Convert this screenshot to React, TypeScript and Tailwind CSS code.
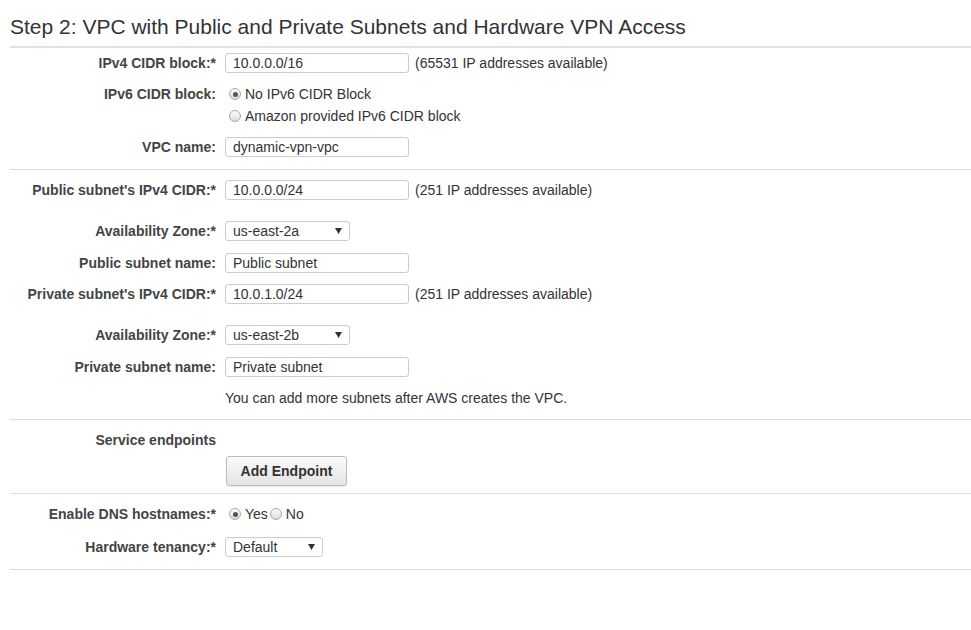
import React from 'react';

const font = { fontFamily: '"Liberation Sans", Arial, sans-serif' };

function Label({ children }: { children: React.ReactNode }) {
	return (
		<div className="w-[206px] shrink-0 text-right font-bold text-[14px] text-[#444] leading-[20px]">
			{children}
		</div>
	);
}

function Row({ label, children, className = '' }: { label?: React.ReactNode; children?: React.ReactNode; className?: string }) {
	return (
		<div className={`flex items-center h-[20px] ${className}`}>
			<Label>{label}</Label>
			<div className="pl-[9px] flex items-center h-[20px]">{children}</div>
		</div>
	);
}

function TextBox({ value }: { value: string }) {
	return (
		<div className="w-[184px] h-[20px] border border-[#ccc] rounded-[3px] pl-[7px] text-[14px] leading-[18px] text-[#333] bg-white">
			{value}
		</div>
	);
}

function Select({ value, width }: { value: string; width: string }) {
	return (
		<div
			className={`${width} h-[20px] border border-[#ccc] rounded-[3px] pl-[7px] pr-[7px] flex items-center justify-between text-[14px] leading-[18px] text-[#333] bg-white`}
		>
			<span>{value}</span>
			<svg width="7" height="6" viewBox="0 0 7 6">
				<path d="M0 0h7L3.5 6z" fill="#333" />
			</svg>
		</div>
	);
}

function Radio({ checked }: { checked?: boolean }) {
	return (
		<span className="w-[12px] h-[12px] rounded-full border border-[#a9a9a9] bg-gradient-to-b from-[#fdfdfd] to-[#dcdcdc] flex items-center justify-center shrink-0">
			{checked && <span className="w-[5px] h-[5px] rounded-full bg-[#555]" />}
		</span>
	);
}

function Hint({ children }: { children: React.ReactNode }) {
	return <span className="ml-[6px] text-[14px] leading-[20px] text-[#333]">{children}</span>;
}

function Divider() {
	return <div className="h-px shrink-0 bg-[#ddd]" />;
}

export default function App() {
	return (
		<div className="w-[971px] h-[630px] bg-white pl-[10px] flex flex-col" style={font}>
			{/* Heading */}
			<div className="h-[48px] shrink-0 pt-[14px] border-b-2 border-[#e2e2e2]">
				<h2 className="text-[21px] leading-[26px] text-[#333]">
					Step 2: VPC with Public and Private Subnets and Hardware VPN Access
				</h2>
			</div>

			{/* VPC */}
			<div className="pt-[5px] pb-[12px] flex flex-col">
				<Row label="IPv4 CIDR block:*">
					<TextBox value="10.0.0.0/16" />
					<Hint>(65531 IP addresses available)</Hint>
				</Row>
				<div className="flex mt-[10px] h-[44px]">
					<div className="w-[206px] shrink-0 text-right font-bold text-[14px] text-[#444] leading-[22px]">
						IPv6 CIDR block:
					</div>
					<div className="pl-[13px] flex flex-col text-[14px] text-[#333] leading-[22px]">
						<label className="flex items-center gap-[4px] h-[22px]">
							<Radio checked />
							No IPv6 CIDR Block
						</label>
						<label className="flex items-center gap-[4px] h-[22px]">
							<Radio />
							Amazon provided IPv6 CIDR block
						</label>
					</div>
				</div>
				<Row label="VPC name:" className="mt-[10px]">
					<TextBox value="dynamic-vpn-vpc" />
				</Row>
			</div>
			<Divider />

			{/* Subnets */}
			<div className="pt-[10px] pb-[11px] flex flex-col">
				<Row label="Public subnet's IPv4 CIDR:*">
					<TextBox value="10.0.0.0/24" />
					<Hint>(251 IP addresses available)</Hint>
				</Row>
				<Row label="Availability Zone:*" className="mt-[21px]">
					<Select value="us-east-2a" width="w-[125px]" />
				</Row>
				<Row label="Public subnet name:" className="mt-[12px]">
					<TextBox value="Public subnet" />
				</Row>
				<Row label="Private subnet's IPv4 CIDR:*" className="mt-[11px]">
					<TextBox value="10.0.1.0/24" />
					<Hint>(251 IP addresses available)</Hint>
				</Row>
				<Row label="Availability Zone:*" className="mt-[21px]">
					<Select value="us-east-2b" width="w-[125px]" />
				</Row>
				<Row label="Private subnet name:" className="mt-[12px]">
					<TextBox value="Private subnet" />
				</Row>
				<Row className="mt-[11px]">
					<span className="text-[14px] leading-[20px] text-[#333]">
						You can add more subnets after AWS creates the VPC.
					</span>
				</Row>
			</div>
			<Divider />

			{/* Endpoints */}
			<div className="pt-[10px] pb-[7px] flex flex-col">
				<Row label="Service endpoints" />
				<div className="flex mt-[6px] h-[30px]">
					<div className="w-[206px] shrink-0" />
					<button className="ml-[10px] w-[121px] h-[30px] border border-[#bdbdbd] rounded-[3px] bg-gradient-to-b from-[#fbfbfb] to-[#e4e4e4] font-bold text-[14px] text-[#333] shadow-[0_1px_1px_rgba(0,0,0,0.08)]">
						Add Endpoint
					</button>
				</div>
			</div>
			<Divider />

			{/* DNS & tenancy */}
			<div className="pt-[10px] pb-[12px] flex flex-col">
				<Row label="Enable DNS hostnames:*">
					<div className="pl-[4px] flex items-center text-[14px] text-[#333] leading-[20px]">
						<Radio checked />
						<span className="ml-[4px]">Yes</span>
						<span className="ml-[2px]">
							<Radio />
						</span>
						<span className="ml-[4px]">No</span>
					</div>
				</Row>
				<Row label="Hardware tenancy:*" className="mt-[13px]">
					<Select value="Default" width="w-[98px]" />
				</Row>
			</div>
			<Divider />
		</div>
	);
}
